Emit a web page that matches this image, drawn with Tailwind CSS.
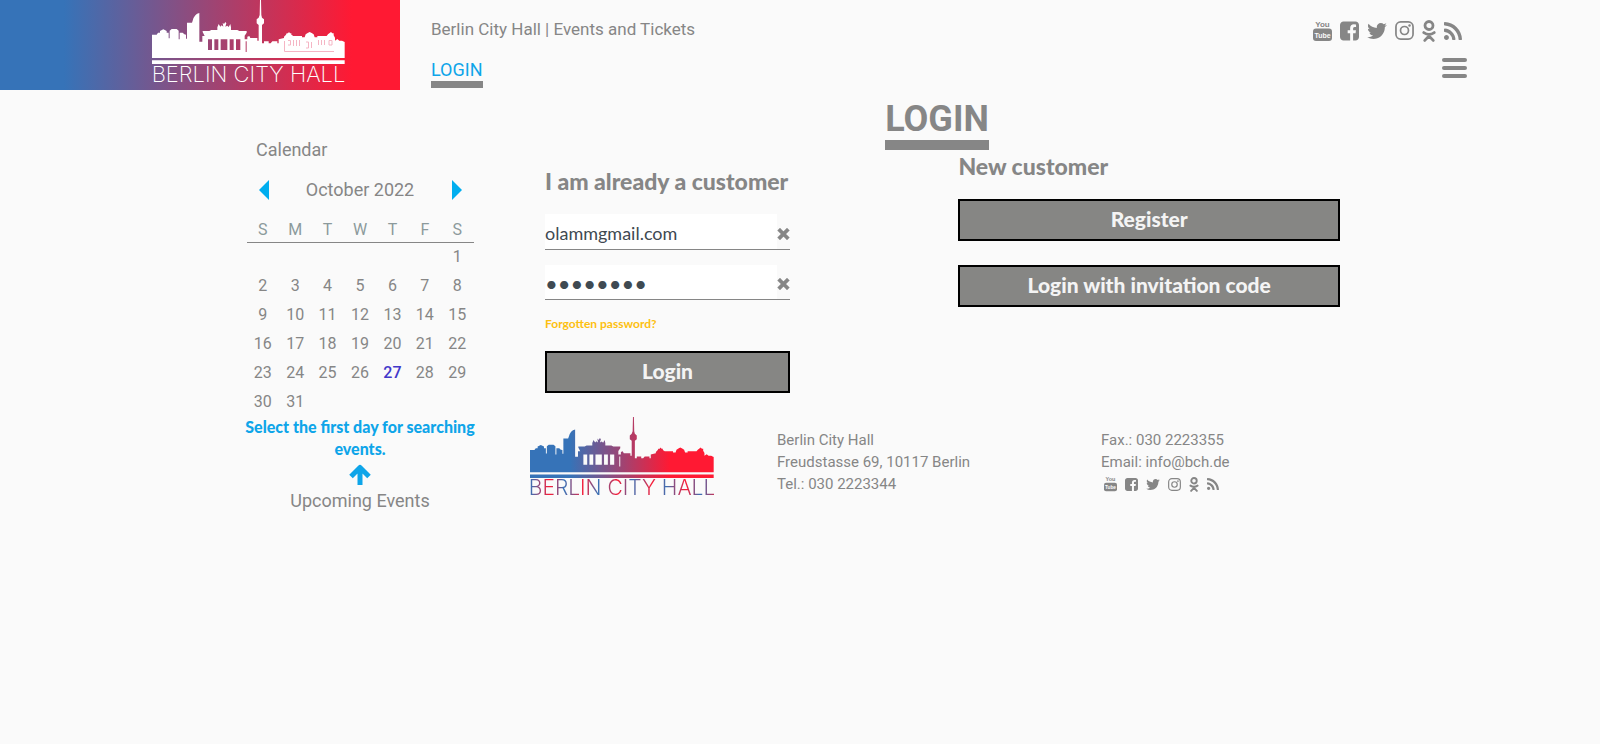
<!DOCTYPE html>
<html lang="en">
<head>
<meta charset="utf-8">
<title>Berlin City Hall | Login</title>
<script src="https://cdn.jsdelivr.net/npm/@tailwindcss/browser@4"></script>
</head>
<body class="min-h-screen bg-[#fafafa] font-['Roboto',sans-serif] text-[#868686]">

<svg class="absolute size-0" aria-hidden="true">
  <defs>
    <linearGradient id="sky" gradientUnits="userSpaceOnUse" x1="36" x2="614" y1="0" y2="0">
      <stop offset="0.22" stop-color="#3673b8"/>
      <stop offset="0.76" stop-color="#ff1933"/>
    </linearGradient>
    <symbol id="skyline" viewBox="36 0 579 192" preserveAspectRatio="none">
      <path fill-rule="evenodd" d="M36 104H50L54 98H60V93L70 88L80 93V98H86V115H89V92L95 87H110L116 92V118H119V98H128L133 103L138 104V116H141V68H156L158 62Q163 42 178 39V125H187V108H194L188 96V93H208L214 90H232V82L236 72L241 80L245 76L250 80L248 68L252 72L256 66L259 70L256 80L262 77L266 81L271 72L273 82V90H292L298 93H320V98L314 107V118H322V110L328 108L331 114H352V122H356V75L350 70V58L356 53L359 45L360 0H363L364 45L366 53L372 58V70L366 75V130H372V124H386V130H392L397 124H412V130H416V118L432 114V110L438 104L440 100H444L447 96L450 100H454V104L460 108H486V112H494L497 103L503 99L509 96L515 99L521 103L524 112H532V108H560L564 103L568 100L573 96L577 100H581V106L585 113V122L592 117L598 122H606L614 126V174H36ZM204 118V150H216V118ZM223 118V150H235V118ZM242 118V150H262V118ZM269 118V150H281V118ZM288 118V150H301V118ZM317 124V156H320V124Z"/>
      <path d="M36 181H614V192H36Z"/>
    </symbol>
    <symbol id="youtube" viewBox="0 0 19 23">
      <text x="9.500" y="7.500" text-anchor="middle" font-family="'Liberation Sans Narrow','Liberation Sans',sans-serif" font-size="8" font-weight="700">You</text>
      <rect x="0" y="9.500" width="19" height="12.500" rx="3"/>
      <text x="9.500" y="18.500" text-anchor="middle" font-family="'Liberation Sans Narrow','Liberation Sans',sans-serif" font-size="7" font-weight="700" fill="#fafafa">Tube</text>
    </symbol>
    <symbol id="facebook" viewBox="128 128 1536 1536"><path d="M1376 128q119 0 203.500 84.500t84.500 203.500v960q0 119-84.500 203.500t-203.500 84.500h-188v-595h199l30-232h-229v-148q0-56 23.500-84t91.500-28l122-1v-207q-63-9-178-9-136 0-217.500 80t-81.500 226v171h-200v232h200v595h-532q-119 0-203.500-84.500t-84.500-203.500v-960q0-119 84.500-203.500t203.500-84.500h960z"/></symbol>
    <symbol id="twitter" viewBox="108 256 1576 1280"><path d="M1684 408q-67 98-162 167 1 14 1 42 0 130-38 259.500t-115.500 248.500-184.500 210.500-258 146-323 54.500q-271 0-496-145 35 4 78 4 225 0 401-138-105-2-188-64.500t-114-159.500q33 5 61 5 43 0 85-11-112-23-185.500-111.500t-73.500-205.500v-4q68 38 146 41-66-44-105-115t-39-154q0-88 44-163 121 149 294.500 238.500t371.500 99.500q-8-38-8-74 0-134 94.500-228.500t228.500-94.500q140 0 236 102 109-21 205-78-37 115-142 178 93-10 186-50z"/></symbol>
    <symbol id="instagram" viewBox="0 0 20 20"><rect x="1" y="1" width="18" height="18" rx="5" fill="none" stroke="currentColor" stroke-width="1.800"/><circle cx="10" cy="10" r="4.200" fill="none" stroke="currentColor" stroke-width="1.800"/><circle cx="15.300" cy="4.700" r="1.300"/></symbol>
    <symbol id="ok" viewBox="0 0 14 22"><g fill="none" stroke="currentColor" stroke-width="2.800" stroke-linecap="round" stroke-linejoin="round"><circle cx="7" cy="5.500" r="4"/><path d="M1.800 12.600Q7 16.200 12.200 12.600M2.800 20.400L7 16L11.200 20.400"/></g></symbol>
    <symbol id="rss" viewBox="192 128 1408 1408"><path d="M576 1344q0 80-56 136t-136 56-136-56-56-136 56-136 136-56 136 56 56 136zm512 123q2 28-17 48-18 21-47 21h-135q-25 0-43-16.500t-20-41.500q-22-229-184.500-391.500t-391.500-184.500q-25-2-41.500-20t-16.500-43v-135q0-29 21-47 17-17 43-17h5q160 13 306 80.500t259 181.500q114 113 181.500 259t80.500 306zm512 2q2 27-18 47-18 20-46 20h-143q-26 0-44.500-17.500t-19.500-42.500q-12-215-101-408.500t-231.500-336-336-231.500-408.500-102q-25-1-42.500-19.500t-17.500-43.500v-143q0-28 20-46 18-18 44-18h3q262 13 501.500 120t425.500 294q187 186 294 425.500t120 501.500z"/></symbol>
    <symbol id="cross" viewBox="0 0 12 12"><path d="M2.500 2.500L9.500 9.500M9.500 2.500L2.500 9.500" fill="none" stroke="currentColor" stroke-width="3.800" stroke-linecap="square"/></symbol>
  </defs>
</svg>

<header class="flex h-[90px]">
  <a href="#" aria-label="Berlin City Hall home" class="flex w-1/4 flex-col items-end bg-linear-to-r/srgb from-[#3673b8] from-16% to-[#ff1933] to-88% pr-[55px]">
    <svg class="h-16 w-[193px] fill-white"><use href="#skyline"/><g fill="none" stroke="#f5b5c4" stroke-width="1"><path d="M132.500 41V51.500H182M136 40.500H138.500V45H136M141.500 40V46M144.500 40V46M147.500 40V46M154 42H156.500V48H154M159.500 42V48M166.500 40V45M169.500 40V45M172.500 40V45M177 40.500H180V45H177Z"/></g></svg>
    <span class="flex w-[193px] justify-center whitespace-nowrap font-['Inter',sans-serif] text-[22px] font-extralight leading-5 text-white">BERLIN CITY HALL</span>
  </a>
  <div class="flex flex-1 flex-col items-start pl-[31px] pt-[18px]">
    <p class="text-[17px] leading-[22px]">Berlin City Hall | Events and Tickets</p>
    <a href="#" class="mt-[19px] border-b-[7px] border-[#868686] text-[18px] leading-[22px] text-[#0ea5e9]">LOGIN</a>
  </div>
  <div class="flex flex-col items-end gap-[15px] pr-[133px] pt-[19px]">
    <nav aria-label="Social media" class="flex items-center gap-2 pr-[5px]">
      <a href="#" aria-label="YouTube"><svg class="h-[23px] w-[19px] fill-current"><use href="#youtube"/></svg></a>
      <a href="#" aria-label="Facebook"><svg class="h-5 w-[19px] fill-current"><use href="#facebook"/></svg></a>
      <a href="#" aria-label="Twitter"><svg class="h-4 w-5 fill-current"><use href="#twitter"/></svg></a>
      <a href="#" aria-label="Instagram"><svg class="h-[19px] w-[19px] fill-current"><use href="#instagram"/></svg></a>
      <a href="#" aria-label="Odnoklassniki"><svg class="h-[22px] w-[14px] fill-current"><use href="#ok"/></svg></a>
      <a href="#" aria-label="RSS"><svg class="h-[18px] w-[18px] fill-current"><use href="#rss"/></svg></a>
    </nav>
    <button aria-label="Menu" class="flex w-[25px] flex-col gap-1 pt-px">
      <span class="h-1 w-full rounded-full bg-[#868686]"></span>
      <span class="h-1 w-full rounded-full bg-[#868686]"></span>
      <span class="h-1 w-full rounded-full bg-[#868686]"></span>
    </button>
  </div>
</header>

<div class="flex items-start gap-[50px] pl-[15%] pr-[16%]">
  <aside class="flex w-60 shrink-0 flex-col items-center pt-12">
    <h2 class="w-full pl-4 text-[18px] leading-6">Calendar</h2>
    <div class="mt-4 flex w-[203px] items-center justify-between">
      <button aria-label="Previous month"><svg viewBox="0 0 10 20" class="h-5 w-2.5 fill-[#00aeef]"><path d="M10 0V20L0 10Z"/></svg></button>
      <span class="text-[18px] leading-6">October 2022</span>
      <button aria-label="Next month"><svg viewBox="0 0 10 20" class="h-5 w-2.5 fill-[#00aeef]"><path d="M0 0V20L10 10Z"/></svg></button>
    </div>
    <table class="mt-4 w-[227px] table-fixed border-collapse text-center text-[16px] leading-5">
      <thead><tr class="h-6 border-b border-[#868686] text-[#8c9a9c]"><th class="font-normal">S</th><th class="font-normal">M</th><th class="font-normal">T</th><th class="font-normal">W</th><th class="font-normal">T</th><th class="font-normal">F</th><th class="font-normal">S</th></tr></thead>
      <tbody>
        <tr class="h-[29px]"><td></td><td></td><td></td><td></td><td></td><td></td><td>1</td></tr>
        <tr class="h-[29px]"><td>2</td><td>3</td><td>4</td><td>5</td><td>6</td><td>7</td><td>8</td></tr>
        <tr class="h-[29px]"><td>9</td><td>10</td><td>11</td><td>12</td><td>13</td><td>14</td><td>15</td></tr>
        <tr class="h-[29px]"><td>16</td><td>17</td><td>18</td><td>19</td><td>20</td><td>21</td><td>22</td></tr>
        <tr class="h-[29px]"><td>23</td><td>24</td><td>25</td><td>26</td><td class="font-medium text-[#4338ca]">27</td><td>28</td><td>29</td></tr>
        <tr class="h-[29px]"><td>30</td><td>31</td><td></td><td></td><td></td><td></td><td></td></tr>
      </tbody>
    </table>
    <p class="text-center font-['Lato',sans-serif] text-[16px] font-black leading-[22px] text-[#0ea5e9]">Select the first day for searching events.</p>
    <svg viewBox="0 0 22 21" class="mt-1 h-[21px] w-[22px]" fill="none" stroke="#0ea5e9" stroke-width="5"><path stroke-linejoin="round" d="M2 12.500L11 3.500L20 12.500M11 4V21"/></svg>
    <a href="#" class="mt-1 text-[18px] leading-6">Upcoming Events</a>
  </aside>

  <main class="min-w-0 flex-1">
    <h1 class="mx-auto mt-2 w-fit border-b-[10px] border-[#868686] text-[36px] font-bold leading-[42px]">LOGIN</h1>
    <div class="grid grid-cols-[52fr_48fr] pl-[15px] pr-1 font-['Lato',sans-serif]">
      <form class="flex w-[245px] flex-col pt-[17px]">
        <h2 class="whitespace-nowrap text-[23px] font-black leading-7">I am already a customer</h2>
        <div class="mt-[19px] flex h-9 items-center border-b border-[#868686]">
          <input type="text" aria-label="Email" value="olammgmail.com" class="h-full min-w-0 flex-1 bg-white pt-0.5 text-[18px] text-[#3f4a52] outline-none">
          <button type="button" aria-label="Clear email"><svg class="mt-1 h-3 w-[13px]"><use href="#cross"/></svg></button>
        </div>
        <div class="mt-[15px] flex h-[35px] items-center border-b border-[#868686]">
          <input type="password" aria-label="Password" value="password" class="h-full min-w-0 flex-1 bg-white pt-0.5 text-[22px] text-[#3f4a52] outline-none">
          <button type="button" aria-label="Clear password"><svg class="mt-1 h-3 w-[13px]"><use href="#cross"/></svg></button>
        </div>
        <a href="#" class="mt-4 w-fit text-[12px] font-bold leading-4 text-[#fdc010]">Forgotten password?</a>
        <button type="submit" class="mt-[19px] h-[42px] border-2 border-black bg-[#868684] pb-0.5 text-[21px] font-black leading-6 text-[#f4f4f4]">Login</button>
      </form>
      <section class="flex flex-col pt-0.5">
        <h2 class="text-[23px] font-black leading-7">New customer</h2>
        <button class="mt-[19px] h-[42px] border-2 border-black bg-[#868684] pb-0.5 text-[21px] font-black leading-6 text-[#f4f4f4]">Register</button>
        <button class="mt-6 h-[42px] border-2 border-black bg-[#868684] pb-0.5 text-[21px] font-black leading-6 text-[#f4f4f4]">Login with invitation code</button>
      </section>
    </div>
    <footer class="mt-6 grid grid-cols-[247fr_324fr_243fr] text-[15px] leading-[22px]">
      <div class="w-[184px]">
        <svg class="h-[61px] w-[184px]" fill="url(#sky)"><use href="#skyline"/></svg>
        <span class="flex justify-center whitespace-nowrap bg-[repeating-linear-gradient(90deg,#3673b8_0px,#ff1933_20px,#3673b8_34px)] bg-clip-text font-['Inter',sans-serif] text-[21px] font-light leading-5 text-transparent">BERLIN CITY HALL</span>
      </div>
      <address class="pt-3 not-italic">Berlin City Hall<br>Freudstasse 69, 10117 Berlin<br>Tel.: 030 2223344</address>
      <div class="pt-3">
        <p>Fax.: 030 2223355</p>
        <p>Email: info@bch.de</p>
        <nav aria-label="Social media links" class="flex h-[22px] items-center gap-2 pl-[3px]">
          <a href="#" aria-label="YouTube"><svg class="h-4 w-[13px] fill-current"><use href="#youtube"/></svg></a>
          <a href="#" aria-label="Facebook"><svg class="h-[13px] w-[13px] fill-current"><use href="#facebook"/></svg></a>
          <a href="#" aria-label="Twitter"><svg class="h-[11px] w-[14px] fill-current"><use href="#twitter"/></svg></a>
          <a href="#" aria-label="Instagram"><svg class="h-[13px] w-[13px] fill-current"><use href="#instagram"/></svg></a>
          <a href="#" aria-label="Odnoklassniki"><svg class="h-[15px] w-2.5 fill-current"><use href="#ok"/></svg></a>
          <a href="#" aria-label="RSS"><svg class="h-3 w-3 fill-current"><use href="#rss"/></svg></a>
        </nav>
      </div>
    </footer>
  </main>
</div>
</body>
</html>
